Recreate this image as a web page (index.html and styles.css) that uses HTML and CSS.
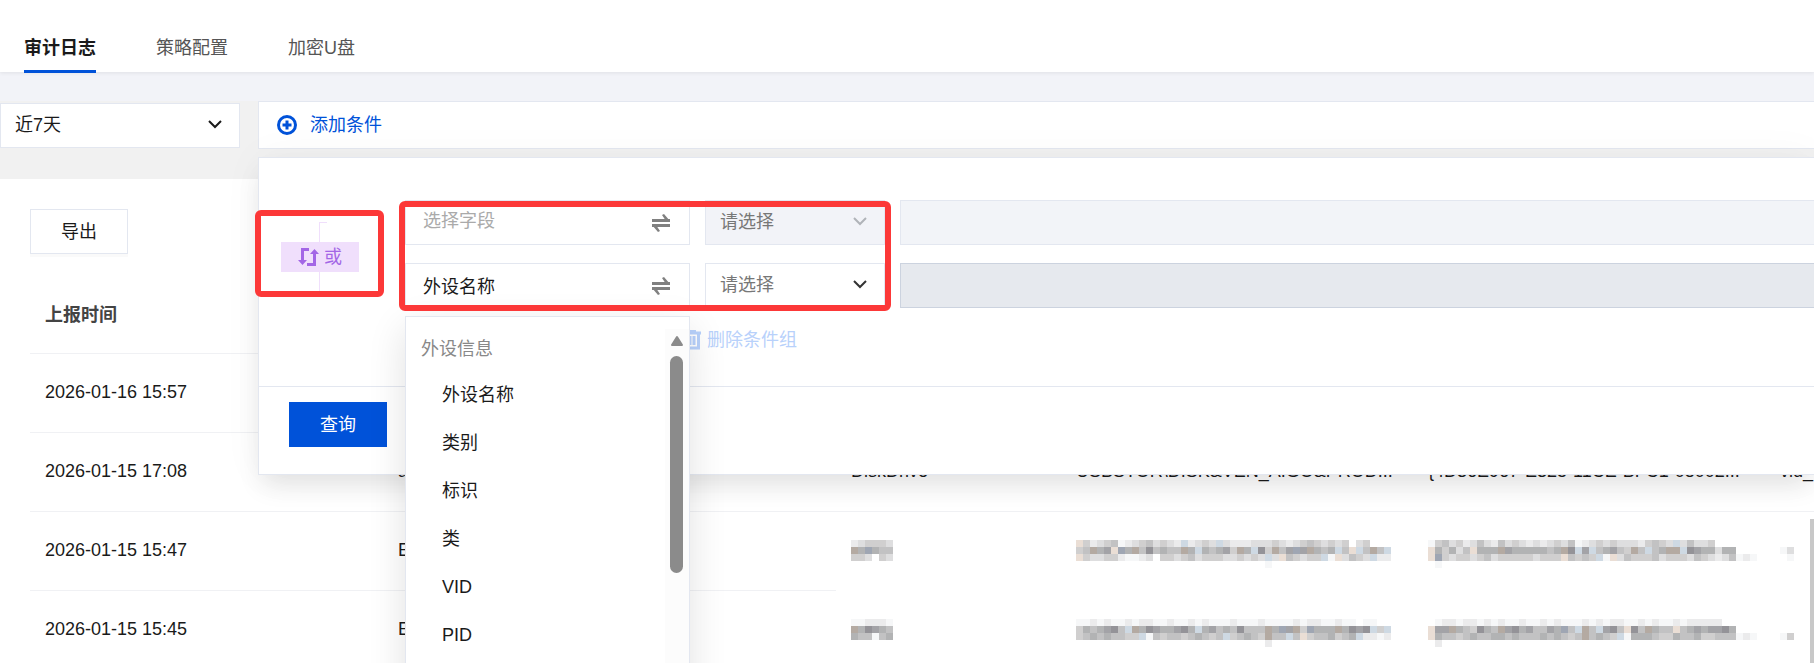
FILE: index.html
```html
<!DOCTYPE html>
<html lang="zh-CN">
<head>
    <meta charset="UTF-8">
    <meta name="viewport" content="width=device-width, initial-scale=1.0">
    <title>审计日志</title>
    <link rel="stylesheet" href="styles.css">
</head>
<body>
    <nav class="tabs">
        <a class="tab active" href="#audit">审计日志</a>
        <a class="tab" href="#policy">策略配置</a>
        <a class="tab" href="#usb">加密U盘</a>
    </nav>

    <div class="toolbar">
        <div class="select-box range">
            <select aria-label="时间范围">
                <option>近7天</option>
            </select>
            <svg class="chevron" viewBox="0 0 14 10"><path d="M1 1l6 6 6-6"/></svg>
        </div>

        <div class="filter">
            <div class="filter-bar">
                <button type="button" class="add-btn">
                    <svg class="add-icon" viewBox="0 0 20 20"><circle cx="10" cy="10" r="8.5"/><path d="M10 5.5v9M5.5 10h9"/></svg>
                    添加条件
                </button>
            </div>

            <!-- 条件面板 -->
            <div class="panel">
                <div class="group">
                    <div class="logic">
                        <button type="button" class="logic-btn">
                            <svg class="logic-icon" viewBox="0 0 20 20">
                                <path class="line" d="M11 2.5H4.5V14M9 17.5h7.500V6"/>
                                <path class="head" d="M0 13h9l-4.500 5zM12 7h9l-4.500-5z"/>
                            </svg>
                            或
                        </button>
                    </div>

                    <div class="conditions">
                        <div class="condition">
                            <div class="field">
                                <input type="text" aria-label="字段" placeholder="选择字段">
                                <svg class="swap" viewBox="0 0 20 18"><path class="line" d="M1 6.500h18M1 11.500h18"/><path class="head" d="M11 1l2-1 6 7h-4zM9 17l-2 1-6-7h4z"/></svg>
                            </div>
                            <div class="select-box operator disabled">
                                <select aria-label="运算符" disabled>
                                    <option>请选择</option>
                                </select>
                                <svg class="chevron" viewBox="0 0 14 10"><path d="M1 1l6 6 6-6"/></svg>
                            </div>
                            <input type="text" class="value" aria-label="值" disabled>
                        </div>

                        <div class="condition">
                            <div class="field">
                                <input type="text" aria-label="字段" value="外设名称">
                                <svg class="swap" viewBox="0 0 20 18"><path class="line" d="M1 6.500h18M1 11.500h18"/><path class="head" d="M11 1l2-1 6 7h-4zM9 17l-2 1-6-7h4z"/></svg>
                                <div class="dropdown">
                                    <div class="dropdown-list">
                                        <p class="dropdown-title">外设信息</p>
                                        <ul>
                                            <li>外设名称</li>
                                            <li>类别</li>
                                            <li>标识</li>
                                            <li>类</li>
                                            <li>VID</li>
                                            <li>PID</li>
                                        </ul>
                                    </div>
                                    <div class="scroll">
                                        <svg class="scroll-up" viewBox="0 0 14 12"><path d="M7 2l5 8H2z"/></svg>
                                        <div class="scroll-thumb"></div>
                                    </div>
                                </div>
                            </div>
                            <div class="select-box operator">
                                <select aria-label="运算符">
                                    <option>请选择</option>
                                </select>
                                <svg class="chevron" viewBox="0 0 14 10"><path d="M1 1l6 6 6-6"/></svg>
                            </div>
                            <input type="text" class="value active" aria-label="值">
                        </div>

                        <button type="button" class="delete-btn" disabled>
                            <svg class="trash" viewBox="0 0 18 20"><path d="M0 3h18M5 1h8M2.500 3v15h13V3M7 6v9M11 6v9"/></svg>
                            删除条件组
                        </button>
                    </div>
                </div>
                <div class="panel-footer">
                    <button type="button" class="query-btn">查询</button>
                </div>
                <div class="mark mark-logic"></div>
                <div class="mark mark-fields"></div>
            </div>
        </div>
    </div>

    <main class="content">
        <button type="button" class="export-btn">导出</button>
        <table class="log-table">
            <colgroup>
                <col class="col-time">
                <col class="col-user">
                <col class="col-type">
                <col class="col-id">
                <col class="col-class">
                <col>
            </colgroup>
            <thead>
                <tr>
                    <th>上报时间</th><th></th><th></th><th></th><th></th><th></th>
                </tr>
            </thead>
            <tbody>
                <tr>
                    <td>2026-01-16 15:57</td><td></td><td></td><td></td><td></td><td></td>
                </tr>
                <tr>
                    <td>2026-01-15 17:08</td>
                    <td>a</td>
                    <td>DiskDrive</td>
                    <td>USBSTOR\DISK&amp;VEN_AIGO&amp;PROD...</td>
                    <td>{4D36E967-E325-11CE-BFC1-08002...</td>
                    <td>vid_</td>
                </tr>
                <tr class="masked">
                    <td>2026-01-15 15:47</td>
                    <td>E</td>
                    <td><svg class="mosaic" data-rows="234443|t6B655|443043|000000"></svg></td>
                    <td><svg class="mosaic" data-rows="p42345123453432b2343b322233343234543434034000|45t67pB6t585655t6b65674t6b84t57B7t656b5pb5t5b|p43344211230443453444334343b3p54344b1p3543b22|000000000000000000000000000100000000000000000"></svg></td>
                    <td><svg class="mosaic" data-rows="14534235325343232343512343433324543b3533400000|p64635p666t76666656t8b7b56754t5b56ttb876636600|pB43443453444443444p5454b1p35444534443543235121|01000000000000000000000000000000000000000000000"></svg></td>
                    <td><svg class="mosaic" data-rows="00|13|01|00"></svg></td>
                </tr>
                <tr class="masked">
                    <td>2026-01-15 15:45</td>
                    <td>E</td>
                    <td><svg class="mosaic" data-rows="112221|t68765|655156|000000"></svg></td>
                    <td><svg class="mosaic" data-rows="112121121221121121211121112111121221121101100|4656785bt68766786b675658555t6B7t4B666t6878b4b|456565544b15455456545b45654t55b5p4556456b2212|000000000000000000000000000200000000000000000"></svg></td>
                    <td><svg class="mosaic" data-rows="01221221212112112121112121221121211212222200|p77t654865t78675576B5bt5b785p85t655p56767786|p655456556656555656545t5654b1666544655644555121|02000000000000000000000000000000000000000000000"></svg></td>
                    <td><svg class="mosaic" data-rows="00|00|14|00"></svg></td>
                </tr>
            </tbody>
        </table>
    </main>
    <div class="page-scroll"></div>

    <script src="script.js"></script>
</body>
</html>
```
FILE: styles.css
```css
:root {
    --primary-color: #0052d9;
    --border-color: #e3e7f0;
    --text-color: #1a1a1a;
    --font: "Liberation Sans", "Noto Sans CJK SC", sans-serif;
}

* {
    margin: 0;
    padding: 0;
    box-sizing: border-box;
}

body {
    position: relative;
    height: 100vh;
    overflow: hidden;
    font-family: var(--font);
    font-size: 18px;
    line-height: 24px;
    color: var(--text-color);
    background: #fff;
}

button,
input,
select {
    font: inherit;
    color: inherit;
    border-radius: 0;
    outline: none;
}

svg {
    display: block;
    fill: none;
    stroke: currentColor;
}

svg .head {
    fill: currentColor;
    stroke: none;
}

/* 顶部标签 */
.tabs {
    position: relative;
    display: flex;
    gap: 60px;
    height: 72px;
    padding: 24px 24px 0;
    background: #fff;
    box-shadow: 0 1px 4px rgba(0, 0, 0, 0.08);
}

.tab {
    height: 49px;
    padding-top: 12px;
    color: #555;
    text-decoration: none;
}

.tab.active {
    color: var(--text-color);
    font-weight: 700;
    border-bottom: 3px solid var(--primary-color);
}

/* 筛选栏 */
.toolbar {
    display: flex;
    gap: 18px;
    height: 107px;
    padding-top: 29px;
    background: linear-gradient(#f2f3f8 29px, #f1f1f1 29px);
}

.select-box {
    position: relative;
    height: 45px;
    color: #333;
}

.select-box select {
    width: 100%;
    height: 100%;
    padding: 0 14px 2px;
    appearance: none;
    background: #fff;
    border: 1px solid var(--border-color);
}

.chevron {
    position: absolute;
    top: 17px;
    right: 18px;
    width: 14px;
    height: 10px;
    stroke-width: 2;
    pointer-events: none;
}

.range {
    flex: 0 0 240px;
    margin-top: 2px;
    color: var(--text-color);
}

.filter {
    position: relative;
    flex: 1;
}

.filter-bar {
    display: flex;
    height: 48px;
    padding: 0 18px;
    background: #fff;
    border: 1px solid var(--border-color);
    border-right: none;
}

.add-btn {
    display: flex;
    align-items: center;
    gap: 13px;
    color: var(--primary-color);
    background: none;
    border: none;
    cursor: pointer;
}

.add-icon {
    width: 20px;
    height: 20px;
    stroke-width: 3;
}

/* 条件面板 */
.panel {
    position: absolute;
    top: 56px;
    left: 0;
    right: 0;
    z-index: 2;
    background: #fff;
    border: 1px solid var(--border-color);
    border-right: none;
    box-shadow: 0 14px 24px -4px rgba(0, 0, 0, 0.1), 0 0 40px rgba(0, 0, 0, 0.04);
}

.group {
    display: flex;
    gap: 46px;
    padding: 42px 0 33px 22px;
}

.logic {
    display: flex;
    align-items: center;
    height: 70px;
    margin-top: 22px;
    background: linear-gradient(#f0dffc, #f0dffc) 38px 0 / 1px 70px no-repeat,
        linear-gradient(#f0dffc, #f0dffc) 38px 0 / 8px 1px no-repeat,
        linear-gradient(#f0dffc, #f0dffc) 38px 69px / 8px 1px no-repeat;
}

.logic-btn {
    display: flex;
    align-items: center;
    justify-content: center;
    gap: 6px;
    width: 78px;
    height: 30px;
    color: #a366e6;
    background: #f0dffc;
    border: none;
    cursor: pointer;
}

.logic-icon {
    width: 20px;
    height: 20px;
    stroke-width: 3;
    overflow: visible;
}

.conditions {
    flex: 1;
    display: flex;
    flex-direction: column;
    gap: 18px;
}

.condition {
    display: flex;
    gap: 15px;
}

.field {
    position: relative;
    flex: 0 0 285px;
    height: 45px;
}

.field input {
    width: 100%;
    height: 100%;
    padding: 0 60px 2px 17px;
    background: #fff;
    border: 1px solid var(--border-color);
}

.field input::placeholder {
    color: #aaa;
}

.swap {
    position: absolute;
    top: 14px;
    right: 19px;
    width: 20px;
    height: 18px;
    color: #808080;
    stroke-width: 3;
}

.operator {
    flex: 0 0 180px;
}

.operator select {
    color: #777;
    opacity: 1;
}

.operator.disabled {
    color: #b0b3b9;
}

.operator.disabled select {
    background: #f2f3f8;
}

.value {
    flex: 1;
    min-width: 0;
    height: 45px;
    background: #f2f4f8;
    border: 1px solid var(--border-color);
    border-right: none;
}

.value.active {
    background: #e6e9ee;
    border-color: #ccd3df;
}

.delete-btn {
    display: flex;
    align-items: center;
    gap: 6px;
    height: 27px;
    margin-left: 278px;
    color: #b8d1fb;
    background: none;
    border: none;
}

.trash {
    width: 18px;
    height: 20px;
    stroke-width: 3;
}

.panel-footer {
    padding: 15px 30px 27px;
    border-top: 1px solid var(--border-color);
}

.query-btn {
    width: 98px;
    height: 45px;
    color: #fff;
    background: var(--primary-color);
    border: none;
    cursor: pointer;
}

/* 字段下拉 */
.dropdown {
    position: absolute;
    top: 53px;
    left: 0;
    right: 0;
    z-index: 3;
    display: flex;
    height: 390px;
    padding-top: 12px;
    background: #fff;
    border: 1px solid var(--border-color);
    box-shadow: 0 12px 36px rgba(0, 0, 0, 0.12);
}

.dropdown-list {
    flex: 1;
}

.dropdown-title {
    height: 42px;
    padding: 8px 15px;
    color: #888;
}

.dropdown-list li {
    height: 48px;
    padding: 12px 36px;
    list-style: none;
}

.scroll {
    width: 24px;
    padding: 6px 5px;
    background: #fcfcfc;
}

.scroll-up {
    width: 14px;
    height: 12px;
    fill: #8b8b8b;
    stroke: #8b8b8b;
    stroke-width: 2;
    stroke-linejoin: round;
}

.scroll-thumb {
    width: 13px;
    height: 217px;
    margin-top: 9px;
    background: #8b8b8b;
    border-radius: 7px;
}

/* 标注框 */
.mark {
    position: absolute;
    z-index: 4;
    border: 6px solid #fc3838;
    border-radius: 6px;
    pointer-events: none;
}

.mark-logic {
    top: 52px;
    left: -4px;
    width: 129px;
    height: 87px;
}

.mark-fields {
    top: 43px;
    left: 140px;
    width: 492px;
    height: 110px;
}

/* 日志列表 */
.content {
    padding: 30px 0 0 30px;
}

.export-btn {
    width: 98px;
    height: 45px;
    background: #fff;
    border: 1px solid var(--border-color);
    box-shadow: 0 3px 0 #fafafa;
    cursor: pointer;
}

.log-table {
    width: 100%;
    margin-top: 20px;
    table-layout: fixed;
    border-collapse: collapse;
}

.log-table th,
.log-table td {
    height: 79px;
    padding: 0 15px 2px;
    text-align: left;
    white-space: nowrap;
    overflow: hidden;
    border-bottom: 1px solid #f0f1f4;
}

.log-table th {
    padding: 4px 15px 0;
    color: #444;
}

.log-table .masked td:nth-child(n + 3) {
    border-bottom-color: transparent;
}

.col-time {
    width: 353px;
}

.col-user {
    width: 453px;
}

.col-type {
    width: 225px;
}

.col-id,
.col-class {
    width: 352px;
}

.mosaic {
    height: 28px;
    margin-top: 8px;
    stroke: none;
    shape-rendering: crispEdges;
}

.page-scroll {
    position: absolute;
    right: 0;
    bottom: 0;
    width: 4px;
    height: 144px;
    background: #c8c8c8;
}
```
FILE: script.js
```javascript
// 打码单元格: 每个字符对应一个 7px 色块
const SIZE = 7;
const COLORS = {
    1: '#f6f7f8', 2: '#ebebec', 3: '#dededf', 4: '#d0cfcf', 5: '#c2c2c3',
    6: '#b2b3b4', 7: '#a3a3a7', 8: '#949398',
    p: '#eaded5', b: '#ced9e3', B: '#9fa6b3', t: '#b4aaa2'
};

document.querySelectorAll('.mosaic').forEach(function(svg) {
    const rows = svg.dataset.rows.split('|');
    svg.setAttribute('width', rows[2].length * SIZE);
    rows.forEach(function(row, y) {
        [...row].forEach(function(key, x) {
            if (!COLORS[key]) return;
            const rect = document.createElementNS('http://www.w3.org/2000/svg', 'rect');
            rect.setAttribute('x', x * SIZE);
            rect.setAttribute('y', y * SIZE);
            rect.setAttribute('width', SIZE);
            rect.setAttribute('height', SIZE);
            rect.setAttribute('fill', COLORS[key]);
            svg.appendChild(rect);
        });
    });
});
```
